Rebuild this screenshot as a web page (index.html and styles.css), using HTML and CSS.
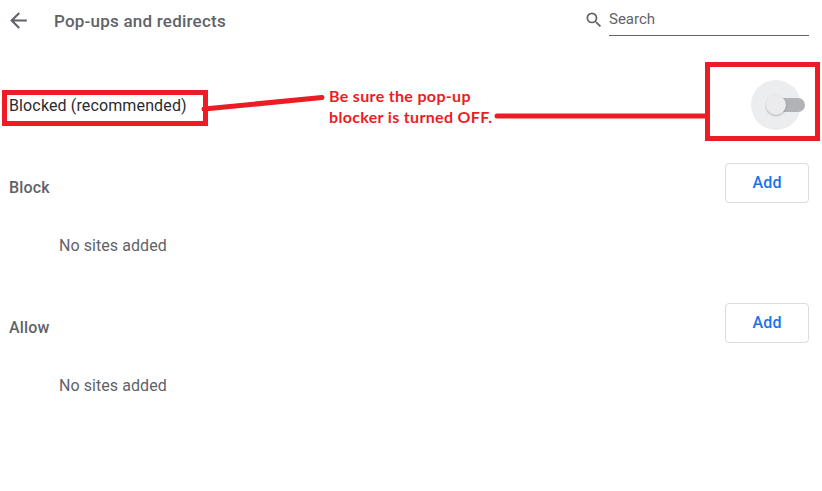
FILE: index.html
```html
<!DOCTYPE html>
<html lang="en">
<head>
    <meta charset="UTF-8">
    <title>Pop-ups and redirects</title>
    <link rel="stylesheet" href="styles.css">
</head>
<body>
    <div class="page">
        <div class="header">
            <svg class="back" width="25" height="25" viewBox="0 0 24 24"><path d="M20 11H7.83l5.59-5.59L12 4l-8 8 8 8 1.41-1.41L7.83 13H20v-2z"/></svg>
            <h1 class="title">Pop-ups and redirects</h1>
            <div class="search">
                <svg class="search-icon" width="20" height="20" viewBox="0 0 24 24"><path d="M15.5 14h-.79l-.28-.27A6.47 6.47 0 0 0 16 9.5 6.5 6.5 0 1 0 9.5 16c1.61 0 3.09-.59 4.23-1.57l.27.28v.79l5 4.99L20.49 19l-4.99-5zm-6 0C7.01 14 5 11.99 5 9.5S7.01 5 9.5 5 14 7.01 14 9.5 11.99 14 9.5 14z"/></svg>
                <div class="search-box">Search</div>
            </div>
        </div>

        <div class="blocked-row">
            <span class="blocked-label">Blocked (recommended)</span>
            <div class="toggle">
                <div class="toggle-halo"></div>
                <div class="toggle-track"></div>
                <div class="toggle-knob"></div>
            </div>
        </div>

        <div class="section">
            <div class="section-head">
                <span class="section-title">Block</span>
                <button class="btn-add">Add</button>
            </div>
            <p class="empty">No sites added</p>
        </div>

        <div class="section">
            <div class="section-head">
                <span class="section-title">Allow</span>
                <button class="btn-add">Add</button>
            </div>
            <p class="empty">No sites added</p>
        </div>

        <!-- red markup drawn over the screenshot -->
        <div class="mark mark-label"></div>
        <div class="mark mark-toggle"></div>
        <svg class="mark-lines" width="822" height="491" viewBox="0 0 822 491">
            <path d="M204 109L322 97.5" stroke="#ed1c24" stroke-width="5" stroke-linecap="round" fill="none"/>
            <path d="M497 116H706" stroke="#ed1c24" stroke-width="5" stroke-linecap="round" fill="none"/>
        </svg>
        <p class="note">Be sure the pop-up<br>blocker is turned OFF.</p>
    </div>
</body>
</html>
```

FILE: styles.css
```css
* {
    box-sizing: border-box;
}
body {
    margin: 0;
    background: #fff;
    font-family: Roboto, "Liberation Sans", sans-serif;
    color: #5f6368;
}
.page {
    position: relative;
    width: 822px;
    height: 491px;
    overflow: hidden;
}
.header {
    display: flex;
    align-items: flex-start;
    height: 62px;
    padding: 8px 13px 0 6px;
}
.back {
    fill: #5f6368;
    flex: none;
}
.title {
    margin: 4px 0 0 23px;
    font-size: 17px;
    line-height: 18px;
    letter-spacing: 0.22px;
    font-weight: 500;
    flex: 1;
}
.search {
    display: flex;
    align-items: flex-start;
    padding-top: 1px;
}
.search-icon {
    fill: #5f6368;
    margin: 1px 5px 0 0;
}
.search-box {
    width: 200px;
    height: 27px;
    border-bottom: 1px solid #5f6368;
    font-size: 15px;
    line-height: 20px;
}
.blocked-row {
    display: flex;
    justify-content: space-between;
    align-items: center;
    height: 86px;
    padding: 0 17px 0 9px;
}
.blocked-label {
    font-size: 16px;
    letter-spacing: 0.13px;
    color: #2a2b2e;
}
.toggle {
    position: relative;
    width: 29px;
    height: 14px;
}
.toggle-halo {
    position: absolute;
    left: -25px;
    top: -18px;
    width: 50px;
    height: 50px;
    border-radius: 50%;
    background: #ecedee;
}
.toggle-track {
    position: absolute;
    inset: 0;
    border-radius: 7px;
    background: #b1b3b7;
}
.toggle-knob {
    position: absolute;
    left: -10px;
    top: -3px;
    width: 20px;
    height: 20px;
    border-radius: 50%;
    background: #ebebed;
    box-shadow: 0 1px 2px rgba(0, 0, 0, 0.25);
}
.section {
    height: 140px;
    padding: 15px 13px 0 9px;
}
.section-head {
    display: flex;
    justify-content: space-between;
    align-items: center;
    height: 40px;
}
.section-title {
    font-size: 16px;
    letter-spacing: 0.15px;
    font-weight: 500;
    margin-top: 9px;
}
.btn-add {
    width: 84px;
    height: 40px;
    padding: 0 0 2px;
    background: #fff;
    border: 1px solid #dadce0;
    border-radius: 4px;
    color: #1a73e8;
    font-family: inherit;
    font-size: 16px;
    letter-spacing: 0.2px;
    font-weight: 500;
}
.empty {
    margin: 34px 0 0 50px;
    font-size: 16px;
    letter-spacing: 0.07px;
    line-height: 18px;
}
.mark {
    position: absolute;
    border: 5px solid #ed1c24;
}
.mark-label {
    left: 2px;
    top: 90px;
    width: 206px;
    height: 36px;
}
.mark-toggle {
    left: 705px;
    top: 62px;
    width: 115px;
    height: 79px;
}
.mark-lines {
    position: absolute;
    left: 0;
    top: 0;
}
.note {
    position: absolute;
    left: 329px;
    top: 85px;
    margin: 0;
    font-family: Lato, sans-serif;
    font-size: 16px;
    line-height: 21px;
    letter-spacing: 0.33px;
    font-weight: 700;
    color: #ed1c24;
    white-space: nowrap;
}
```
